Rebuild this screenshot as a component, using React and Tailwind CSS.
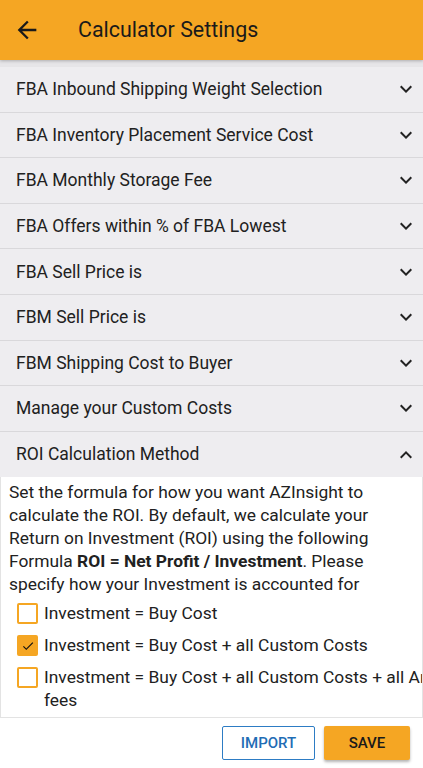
import { useState } from "react";

const sections = [
  "FBA Inbound Shipping Weight Selection",
  "FBA Inventory Placement Service Cost",
  "FBA Monthly Storage Fee",
  "FBA Offers within % of FBA Lowest",
  "FBA Sell Price is",
  "FBM Sell Price is",
  "FBM Shipping Cost to Buyer",
  "Manage your Custom Costs",
];

const options = [
  "Investment = Buy Cost",
  "Investment = Buy Cost + all Custom Costs",
  "Investment = Buy Cost + all Custom Costs + all Amazon fees",
];

function Chevron({ up }) {
  return (
    <svg width="24" height="24" viewBox="0 0 24 24" className={up ? "rotate-180" : ""}>
      <path d="M16.59 8.59L12 13.17 7.41 8.59 6 10l6 6 6-6z" fill="#222" />
    </svg>
  );
}

function Checkbox({ checked, onClick }) {
  return (
    <button
      onClick={onClick}
      className={`w-[21px] h-[21px] shrink-0 rounded-[2px] border-2 border-[#f5a623] flex items-center justify-center ${
        checked ? "bg-[#f5a623]" : "bg-white"
      }`}
    >
      {checked && (
        <svg width="14" height="14" viewBox="0 0 24 24">
          <path d="M9 16.17L4.83 12l-1.42 1.41L9 19 21 7l-1.41-1.41z" fill="#111" />
        </svg>
      )}
    </button>
  );
}

export default function App() {
  const [selected, setSelected] = useState(1);

  return (
    <div className="w-[423px] h-[768px] overflow-hidden flex flex-col bg-white font-['Roboto',sans-serif] text-[#212121]">
      {/* top bar */}
      <div className="h-[60px] shrink-0 bg-[#f5a623] flex items-center shadow-[0_1px_3px_rgba(0,0,0,0.25)] relative z-10">
        <button className="ml-[13px] w-[28px] h-[28px]">
          <svg width="28" height="28" viewBox="0 0 24 24">
            <path d="M20 11H7.83l5.59-5.59L12 4l-8 8 8 8 1.41-1.41L7.83 13H20v-2z" fill="#1a1a1a" />
          </svg>
        </button>
        <h1 className="ml-[37px] text-[21.4px] text-[#1a1a1a]">Calculator Settings</h1>
      </div>

      <div className="flex-1 flex flex-col overflow-hidden bg-[#e7e6e9]">
        <div className="h-[7px] shrink-0 bg-[#e6e5e8]" />
        {sections.map((s) => (
          <div
            key={s}
            className="h-[45.6px] shrink-0 flex items-center justify-between pl-4 pr-[5px] bg-[#eeedf0] border-b border-[#d9d8db]"
          >
            <span className="text-[17.5px]">{s}</span>
            <Chevron />
          </div>
        ))}
        <div className="h-[45.6px] shrink-0 flex items-center justify-between pl-4 pr-[5px] bg-[#eeedf0]">
          <span className="text-[17.5px]">ROI Calculation Method</span>
          <Chevron up />
        </div>

        <div className="h-[241px] shrink-0 bg-white border border-[#e3e3e3] border-t-0 pl-[8px] pt-[4px] overflow-hidden">
          <p className="text-[17.4px] leading-[23px] pr-3">
            Set the formula for how you want AZInsight to calculate the ROI. By default, we calculate your
            Return on Investment (ROI) using the following Formula{" "}
            <b className="font-bold">ROI = Net Profit / Investment</b>. Please specify how your Investment is
            accounted for
          </p>
          <div className="mt-[7px] flex flex-col gap-[10px] pl-2">
            {options.map((o, i) => (
              <div key={o} className="flex items-start gap-[6px]">
                <Checkbox checked={selected === i} onClick={() => setSelected(i)} />
                <span className="text-[17.4px] leading-[23px] -mt-[1px] w-[440px] shrink-0">{o}</span>
              </div>
            ))}
          </div>
        </div>

        <div className="flex-1 bg-white flex items-start justify-end gap-[9px] pr-[13px] pt-[8px]">
          <button className="w-[93px] h-[34px] border border-[#2d7cc4] rounded-[2px] text-[#1f6db5] text-[15px] font-medium bg-white">
            IMPORT
          </button>
          <button className="w-[86px] h-[34px] bg-[#f5a623] rounded-[2px] text-[#1a1a1a] text-[15px] font-medium shadow-[0_2px_3px_rgba(0,0,0,0.3)]">
            SAVE
          </button>
        </div>
      </div>
    </div>
  );
}
